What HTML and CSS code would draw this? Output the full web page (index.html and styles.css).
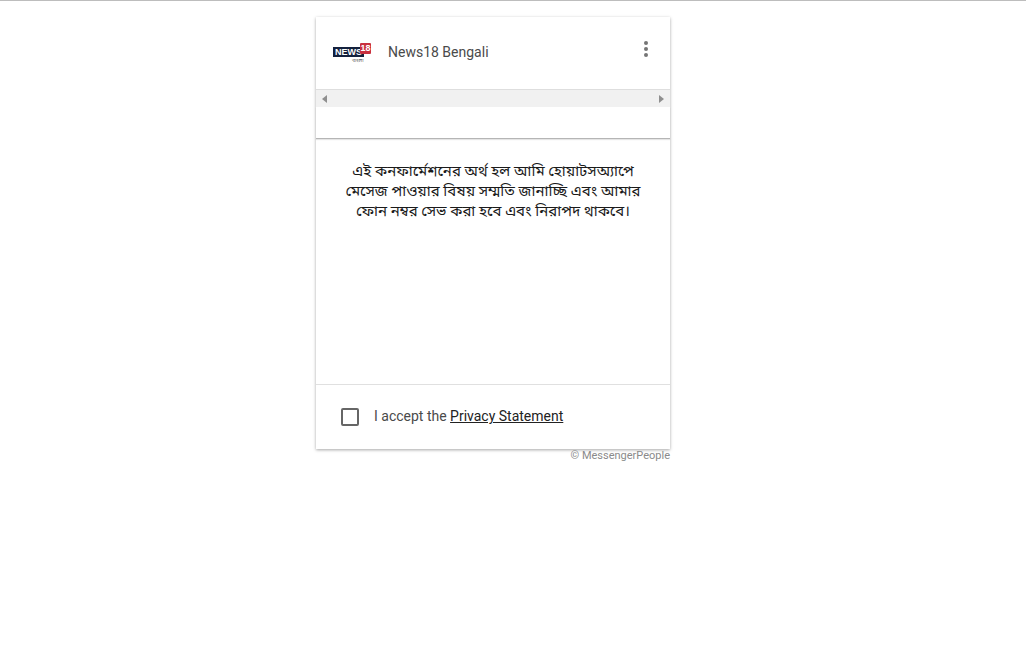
FILE: index.html
```html
<!DOCTYPE html>
<html lang="bn">
<head>
    <meta charset="UTF-8">
    <title>News18 Bengali</title>
    <link rel="stylesheet" href="styles.css">
</head>
<body>
    <div class="wrap">
        <div class="card">
            <div class="header">
                <div class="logo">
                    <div class="logo-row">
                        <span class="logo-news">NEWS</span>
                        <span class="logo-18">18</span>
                    </div>
                    <span class="logo-sub">বাংলা</span>
                </div>
                <span class="name">News18 Bengali</span>
                <div class="dots"><i></i><i></i><i></i></div>
            </div>
            <div class="scrollbar">
                <span class="arrow arrow-left"></span>
                <span class="arrow arrow-right"></span>
            </div>
            <div class="tabs"></div>
            <div class="content">
                <p>এই কনফার্মেশনের অর্থ হল আমি হোয়াটসঅ্যাপে মেসেজ পাওয়ার বিষয় সম্মতি জানাচ্ছি এবং আমার ফোন নম্বর সেভ করা হবে এবং নিরাপদ থাকবে।</p>
            </div>
            <div class="footer">
                <span class="checkbox"></span>
                <span class="accept">I accept the <a href="#">Privacy Statement</a></span>
            </div>
        </div>
        <div class="copyright">© MessengerPeople</div>
    </div>
</body>
</html>
```

FILE: styles.css
```css
body {
    margin: 0;
    border-top: 1px solid #bdbdbd;
    background-color: #fff;
    font-family: Roboto, "Noto Sans Bengali", "Noto Sans", sans-serif;
}

.wrap {
    width: 354px;
    margin-left: 316px;
    padding-top: 16px;
}

.card {
    background-color: #fff;
    box-shadow: 0 1px 3px rgba(0, 0, 0, 0.35);
}

.header {
    display: flex;
    align-items: center;
    height: 72px;
    padding: 0 16px 0 17px;
}

.logo {
    display: flex;
    flex-direction: column;
    align-items: flex-start;
    width: 38px;
    margin-right: 17px;
}

.logo-row {
    display: flex;
    align-items: flex-end;
}

.logo-news {
    background-color: #14213d;
    color: #fff;
    font: bold 9px/10px "Liberation Sans", sans-serif;
    padding-left: 2px;
    width: 31px;
    box-sizing: border-box;
}

.logo-18 {
    background-color: #c8303f;
    color: #fff;
    font: bold 9px/11px "Liberation Sans", sans-serif;
    width: 11px;
    height: 11px;
    margin-left: -4px;
    margin-bottom: 3px;
    border-radius: 1px;
    text-align: center;
}

.logo-sub {
    font-size: 5px;
    line-height: 6px;
    color: #555;
    margin-left: 19px;
}

.name {
    flex: 1;
    font-size: 14px;
    color: #4a4a4a;
    margin-bottom: 2px;
}

.dots {
    display: flex;
    flex-direction: column;
    gap: 2px;
    margin-top: -8px;
    margin-right: 6px;
}

.dots i {
    display: block;
    width: 4px;
    height: 4px;
    border-radius: 50%;
    background-color: #757575;
}

.scrollbar {
    display: flex;
    justify-content: space-between;
    align-items: center;
    height: 17px;
    padding: 0 6px;
    background-color: #f1f1f1;
    border-top: 1px solid #dedede;
}

.arrow {
    width: 0;
    height: 0;
    border-top: 4px solid transparent;
    border-bottom: 4px solid transparent;
}

.arrow-left {
    border-right: 5px solid #8f8f8f;
}

.arrow-right {
    border-left: 5px solid #8f8f8f;
}

.tabs {
    height: 31px;
    border-bottom: 1px solid #b5b5b5;
    box-shadow: 0 1px 1px rgba(0, 0, 0, 0.1);
}

.content {
    height: 246px;
    padding: 22px 24px 0;
    box-sizing: border-box;
    border-bottom: 1px solid #e0e0e0;
}

.content p {
    margin: 0;
    font-size: 15px;
    line-height: 20px;
    text-align: center;
    color: #1a1a1a;
}

.footer {
    display: flex;
    align-items: center;
    height: 64px;
    padding-left: 25px;
}

.checkbox {
    width: 14px;
    height: 14px;
    border: 2px solid #666;
    border-radius: 2px;
    margin-right: 15px;
}

.accept {
    font-size: 14px;
    color: #4a4a4a;
    margin-top: -2px;
}

.accept a {
    color: #222;
}

.copyright {
    font-size: 11px;
    line-height: 13px;
    text-align: right;
    color: #8a8a8a;
}
```
